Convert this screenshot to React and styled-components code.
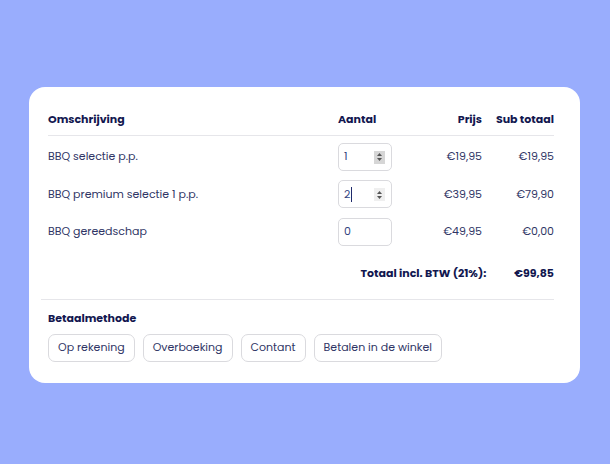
import React from 'react'
import styled, { createGlobalStyle } from 'styled-components';

const GlobalStyle = createGlobalStyle`
  html, body {
    margin: 0;
    padding: 0;
    background: #99adfd;
    font-family: "Poppins", "Inter", "Noto Sans", sans-serif;
  }
`;

const StyledPage = styled.div`
  width: 610px;
  height: 464px;
  padding: 87px 30px 0 29px;
  box-sizing: border-box;
`;

const StyledCard = styled.div`
  background: #fff;
  border-radius: 16px;
  height: 296px;
  box-sizing: border-box;
  padding: 13px 26px 0 12px;
`;

const StyledTable = styled.div`
  padding-left: 7px;
`;

const StyledHeadRow = styled.div`
  display: grid;
  grid-template-columns: 290px 72px 72px 72px;
  align-items: center;
  height: 36px;
  box-sizing: border-box;
  padding-top: 4px;
  border-bottom: 1px solid #e6e6ea;
`;

const StyledBody = styled.div`
  padding-top: 2px;
`;

const StyledRow = styled.div`
  display: grid;
  grid-template-columns: 290px 72px 72px 72px;
  align-items: center;
  height: 37.5px;
`;

const StyledHead = styled.div`
  font-size: 11px;
  font-weight: 700;
  color: #12174f;
  text-align: ${({ $right }) => ($right ? 'right' : 'left')};
  white-space: nowrap;
`;

const StyledCell = styled.div`
  font-size: 11px;
  color: #2f3565;
  text-align: ${({ $right }) => ($right ? 'right' : 'left')};
  white-space: nowrap;
`;

const StyledTotalRow = styled.div`
  display: flex;
  justify-content: flex-end;
  align-items: center;
  height: 45px;
  font-size: 11px;
  font-weight: 700;
  color: #12174f;
`;

const StyledTotalLabel = styled.span`
  margin-right: 28px;
`;

const StyledDivider = styled.hr`
  border: none;
  border-top: 1px solid #e6e6ea;
  margin: 3px 0 0 0;
`;

const StyledSection = styled.div`
  padding: 10px 0 0 7px;
`;

const StyledSectionTitle = styled.div`
  font-size: 11px;
  font-weight: 700;
  color: #12174f;
  line-height: 16px;
  margin-bottom: 8px;
`;

const StyledOptions = styled.div`
  display: flex;
  gap: 8px;
`;

const StyledOption = styled.button`
  font-family: inherit;
  font-size: 11px;
  color: #2f3565;
  background: #fff;
  border: 1px solid #dadade;
  border-radius: 7px;
  height: 28px;
  padding: 0 9px;
  cursor: pointer;
`;

const StyledQty = styled.div`
  position: relative;
  width: 54px;
  height: 28px;
  box-sizing: border-box;
  border: 1px solid #dadade;
  border-radius: 5px;
  display: flex;
  align-items: center;
  padding-left: 5px;
  font-size: 11px;
  color: #34437f;
`;

const StyledCaret = styled.span`
  display: inline-block;
  width: 1px;
  height: 15px;
  background: #1f2a6b;
  margin-left: 1px;
`;

const StyledSpinner = styled.span`
  position: absolute;
  right: 6px;
  top: 7px;
  width: 11px;
  height: 13px;
  background: ${({ $active }) => ($active ? '#d6d6d6' : '#efefef')};
  display: flex;
  flex-direction: column;
  align-items: center;
  justify-content: center;
  gap: 2px;
`;

const Arrow = ({ down }) => (
  <svg width="5" height="3" viewBox="0 0 5 3">
    <path d={down ? 'M0 0 L5 0 L2.5 3 Z' : 'M0 3 L5 3 L2.5 0 Z'} fill="#555" />
  </svg>
);

const QtyInput = ({ value, spinner, active, caret }) => (
  <StyledQty>
    {value}
    {caret && <StyledCaret />}
    {spinner && (
      <StyledSpinner $active={active}>
        <Arrow />
        <Arrow down />
      </StyledSpinner>
    )}
  </StyledQty>
);

const items = [
  { name: 'BBQ selectie p.p.', qty: '1', price: '€19,95', sub: '€19,95', spinner: true, active: true },
  { name: 'BBQ premium selectie 1 p.p.', qty: '2', price: '€39,95', sub: '€79,90', spinner: true, caret: true },
  { name: 'BBQ gereedschap', qty: '0', price: '€49,95', sub: '€0,00' },
];

const methods = ['Op rekening', 'Overboeking', 'Contant', 'Betalen in de winkel'];

const App = () => {
  return (<StyledPage>
    <GlobalStyle />
    <StyledCard>
      <StyledTable>
        <StyledHeadRow>
          <StyledHead>Omschrijving</StyledHead>
          <StyledHead>Aantal</StyledHead>
          <StyledHead $right>Prijs</StyledHead>
          <StyledHead $right>Sub totaal</StyledHead>
        </StyledHeadRow>
        <StyledBody>
          {items.map((item) => (
            <StyledRow key={item.name}>
              <StyledCell>{item.name}</StyledCell>
              <div>
                <QtyInput value={item.qty} spinner={item.spinner} active={item.active} caret={item.caret} />
              </div>
              <StyledCell $right>{item.price}</StyledCell>
              <StyledCell $right>{item.sub}</StyledCell>
            </StyledRow>
          ))}
        </StyledBody>
        <StyledTotalRow>
          <StyledTotalLabel>Totaal incl. BTW (21%):</StyledTotalLabel>
          <span>€99,85</span>
        </StyledTotalRow>
      </StyledTable>
      <StyledDivider />
      <StyledSection>
        <StyledSectionTitle>Betaalmethode</StyledSectionTitle>
        <StyledOptions>
          {methods.map((m) => <StyledOption key={m}>{m}</StyledOption>)}
        </StyledOptions>
      </StyledSection>
    </StyledCard>
  </StyledPage>)
}

export default App;
